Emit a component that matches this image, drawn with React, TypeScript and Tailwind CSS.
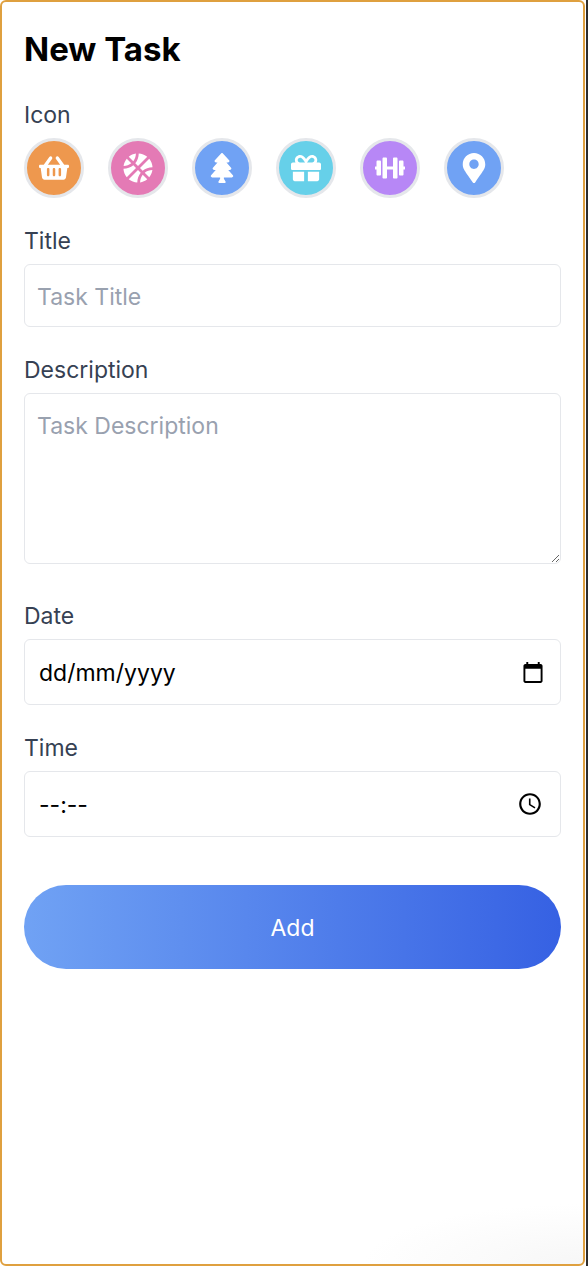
import { useState, type ReactNode } from "react";
import type { IconType } from "react-icons";
import {
  FaBasketballBall,
  FaDumbbell,
  FaGift,
  FaMapMarkerAlt,
  FaShoppingBasket,
  FaTree,
} from "react-icons/fa";
import { MdOutlineAccessTime } from "react-icons/md";

type TaskIcon = { name: string; Icon: IconType; color: string };

const taskIcons: TaskIcon[] = [
  { name: "Shopping", Icon: FaShoppingBasket, color: "bg-[#ee984e]" },
  { name: "Sport", Icon: FaBasketballBall, color: "bg-[#e47ab5]" },
  { name: "Nature", Icon: FaTree, color: "bg-[#70a2f4]" },
  { name: "Gift", Icon: FaGift, color: "bg-[#66d0e9]" },
  { name: "Workout", Icon: FaDumbbell, color: "bg-[#b787f6]" },
  { name: "Place", Icon: FaMapMarkerAlt, color: "bg-[#70a2f4]" },
];

const labelClass = "text-[23px] leading-[38px] text-gray-700";
const fieldClass =
  "block w-full rounded-md border border-gray-200 bg-white px-3 pt-3.5 pb-[11px] text-[23px] leading-9 text-black outline-none placeholder:text-gray-400 focus:border-blue-400";

function Field({ id, label, children }: { id: string; label: string; children: ReactNode }) {
  return (
    <div className="flex flex-col gap-1">
      <label htmlFor={id} className={labelClass}>
        {label}
      </label>
      {children}
    </div>
  );
}

function CalendarIcon() {
  return (
    <svg viewBox="2 1 20 22" className="mr-[3px] h-[21px] w-5" fill="currentColor" aria-hidden="true">
      <path d="M20 3h-1V1h-2v2H7V1H5v2H4c-1.100 0-2 .9-2 2v16c0 1.100.9 2 2 2h16c1.100 0 2-.9 2-2V5c0-1.100-.9-2-2-2zm0 18H4V8h16v13z" />
    </svg>
  );
}

type PickerProps = { id: string; kind: "date" | "time"; hint: string; icon: ReactNode };

// Shows the format hint while empty and becomes a native picker when focused.
function PickerInput({ id, kind, hint, icon }: PickerProps) {
  const [active, setActive] = useState(false);
  const [value, setValue] = useState("");
  return (
    <div className="flex items-center rounded-md border border-gray-200 bg-white px-3.5 py-[13px] focus-within:border-blue-400">
      <input
        id={id}
        type={active || value ? kind : "text"}
        placeholder={hint}
        value={value}
        onFocus={() => setActive(true)}
        onBlur={() => setActive(false)}
        onChange={(e) => setValue(e.target.value)}
        className="min-w-0 flex-1 pt-0.5 text-[23px] leading-9 text-black outline-none placeholder:text-black"
      />
      {!active && !value && icon}
    </div>
  );
}

export default function App() {
  const [selected, setSelected] = useState<string | null>(null);

  return (
    <div className="min-h-screen bg-[#2d2d2d] pr-0.5 font-['Inter',sans-serif]">
      <div className="min-h-screen bg-white pr-px">
        <main className="min-h-screen rounded-md border-2 border-[#dfa03f] bg-white bg-[radial-gradient(220px_60px_at_bottom_right,#f7f7f7,#ffffff)] p-[22px]">
          <h1 className="text-[33px] leading-[50px] font-bold text-black">New Task</h1>

          <form className="mt-[22px] flex flex-col gap-6" onSubmit={(e) => e.preventDefault()}>
            <fieldset>
              <legend className={labelClass}>Icon</legend>
              <div className="mt-1 flex flex-wrap gap-6">
                {taskIcons.map(({ name, Icon, color }) => (
                  <button
                    key={name}
                    type="button"
                    aria-label={name}
                    aria-pressed={selected === name}
                    onClick={() => setSelected(name)}
                    className={`flex size-[60px] items-center justify-center rounded-full border-3 text-white ${color} ${
                      selected === name ? "border-blue-500" : "border-gray-200"
                    }`}
                  >
                    <Icon className="size-[30px]" />
                  </button>
                ))}
              </div>
            </fieldset>

            <Field id="title" label="Title">
              <input id="title" type="text" placeholder="Task Title" className={fieldClass} />
            </Field>

            <Field id="description" label="Description">
              <textarea
                id="description"
                placeholder="Task Description"
                className={`${fieldClass} mb-[9px] h-[171px]`}
              />
            </Field>

            <Field id="date" label="Date">
              <PickerInput id="date" kind="date" hint="dd/mm/yyyy" icon={<CalendarIcon />} />
            </Field>

            <Field id="time" label="Time">
              <PickerInput
                id="time"
                kind="time"
                hint="--:--"
                icon={<MdOutlineAccessTime className="mr-[3px] size-[26px]" />}
              />
            </Field>

            <button
              type="submit"
              className="mt-6 h-21 w-full rounded-full bg-linear-to-r/srgb from-[#70a2f4] to-[#3661e3] pt-0.5 text-[23px] leading-9 text-white"
            >
              Add
            </button>
          </form>
        </main>
      </div>
    </div>
  );
}
